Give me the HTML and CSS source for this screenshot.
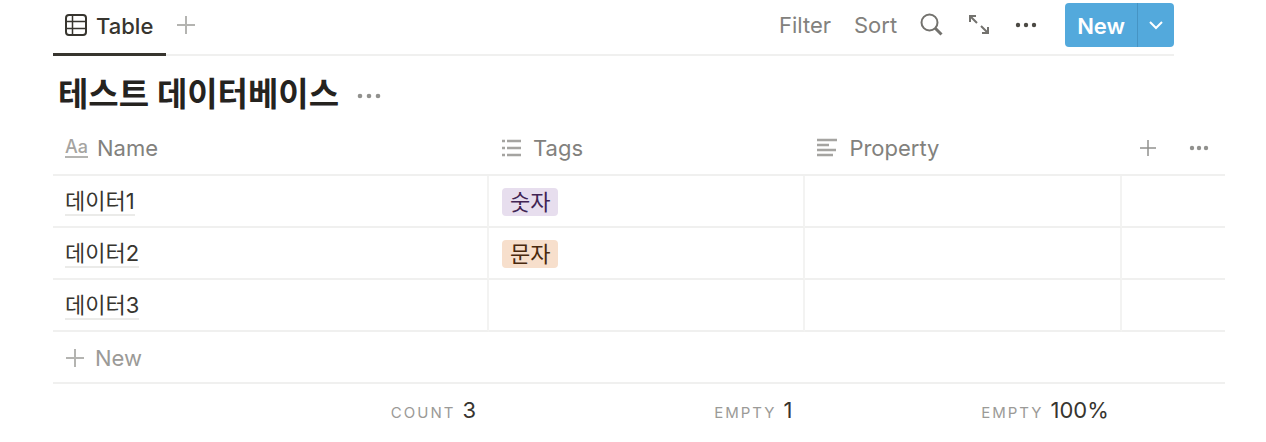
FILE: index.html
```html
<!DOCTYPE html>
<html lang="ko">
    <head>
        <meta charset="UTF-8">
        <meta name="viewport" content="width=device-width, initial-scale=1">
        <title>테스트 데이터베이스</title>
        <link rel="stylesheet" href="styles.css">
    </head>
    <body>
        <div class="toolbar">
            <nav class="tabs">
                <a href="#table" class="tab active">
                    <svg width="24" height="24" viewBox="0 0 24 24" fill="none" stroke="currentColor">
                        <rect x="2" y="1" width="20" height="20" rx="3" stroke-width="2"/>
                        <path d="M2 7.5h20M2 14.5h20M8.5 1v20" stroke-width="1.5"/>
                    </svg>
                    Table
                </a>
                <button class="icon-button add-view" aria-label="Add view">
                    <svg width="20" height="20" viewBox="0 0 20 20" stroke="currentColor" stroke-width="2">
                        <path d="M10 1v18M1 10h18"/>
                    </svg>
                </button>
            </nav>
            <div class="actions">
                <button class="text-button">Filter</button>
                <button class="text-button">Sort</button>
                <button class="icon-button" aria-label="Search">
                    <svg width="24" height="24" viewBox="0 0 24 24" fill="none" stroke="currentColor">
                        <circle cx="9.5" cy="9.5" r="8" stroke-width="2"/>
                        <path d="M15 15l6.5 6.5" stroke-width="3"/>
                    </svg>
                </button>
                <button class="icon-button" aria-label="Open as page">
                    <svg width="24" height="24" viewBox="0 0 24 24" fill="none" stroke="currentColor" stroke-width="2">
                        <path d="M3 9V3h6M3 3l7 7M21 14v6h-6M21 20l-7-7"/>
                    </svg>
                </button>
                <button class="icon-button dark" aria-label="View options">
                    <svg width="24" height="24" viewBox="0 0 24 24" fill="currentColor">
                        <circle cx="4" cy="12" r="2.2"/>
                        <circle cx="12" cy="12" r="2.2"/>
                        <circle cx="20" cy="12" r="2.2"/>
                    </svg>
                </button>
                <div class="new-group">
                    <button class="new-button">New</button>
                    <button class="new-arrow" aria-label="Templates">
                        <svg width="16" height="16" viewBox="0 0 16 16" fill="none" stroke="currentColor" stroke-width="2">
                            <path d="M2 5l6 6 6-6"/>
                        </svg>
                    </button>
                </div>
            </div>
        </div>

        <div class="title-row">
            <h1>테스트 데이터베이스</h1>
            <button class="icon-button" aria-label="Database options">
                <svg width="24" height="24" viewBox="0 0 24 24" fill="currentColor">
                    <circle cx="3" cy="14" r="2.3"/>
                    <circle cx="12" cy="14" r="2.3"/>
                    <circle cx="21" cy="14" r="2.3"/>
                </svg>
            </button>
        </div>

        <table id="table">
            <colgroup>
                <col class="col-name">
                <col class="col-property">
                <col class="col-property">
                <col>
            </colgroup>
            <thead>
                <tr>
                    <th>
                        <div class="heading name"><span class="aa">Aa</span>Name</div>
                    </th>
                    <th>
                        <div class="heading">
                            <svg width="20" height="20" viewBox="0 0 20 20" stroke="currentColor" stroke-width="2.5">
                                <path d="M1 3h3M6 3h14M1 10h3M6 10h14M1 17h3M6 17h14"/>
                            </svg>
                            Tags
                        </div>
                    </th>
                    <th>
                        <div class="heading">
                            <svg width="20" height="20" viewBox="0 0 20 20" stroke="currentColor" stroke-width="2.5">
                                <path d="M0 2h20M0 7h12M0 12h19M0 17h16"/>
                            </svg>
                            Property
                        </div>
                    </th>
                    <th>
                        <div class="column-actions">
                            <button class="icon-button" aria-label="Add property">
                                <svg width="18" height="18" viewBox="0 0 18 18" stroke="currentColor" stroke-width="1.5">
                                    <path d="M9 1v16M1 9h16"/>
                                </svg>
                            </button>
                            <button class="icon-button" aria-label="Property options">
                                <svg width="20" height="20" viewBox="0 0 20 20" fill="currentColor">
                                    <circle cx="3" cy="10" r="2.2"/>
                                    <circle cx="10" cy="10" r="2.2"/>
                                    <circle cx="17" cy="10" r="2.2"/>
                                </svg>
                            </button>
                        </div>
                    </th>
                </tr>
            </thead>
            <tbody>
                <tr>
                    <td><a href="#data1" class="page-link">데이터1</a></td>
                    <td><span class="tag purple">숫자</span></td>
                    <td></td>
                    <td></td>
                </tr>
                <tr>
                    <td><a href="#data2" class="page-link">데이터2</a></td>
                    <td><span class="tag orange">문자</span></td>
                    <td></td>
                    <td></td>
                </tr>
                <tr>
                    <td><a href="#data3" class="page-link">데이터3</a></td>
                    <td></td>
                    <td></td>
                    <td></td>
                </tr>
                <tr>
                    <td colspan="4">
                        <button class="add-row">
                            <svg width="20" height="20" viewBox="0 0 20 20" stroke="currentColor" stroke-width="2">
                                <path d="M10 1v18M1 10h18"/>
                            </svg>
                            New
                        </button>
                    </td>
                </tr>
            </tbody>
            <tfoot>
                <tr>
                    <td><span class="label">COUNT</span>3</td>
                    <td><span class="label">EMPTY</span>1</td>
                    <td><span class="label">EMPTY</span>100%</td>
                    <td></td>
                </tr>
            </tfoot>
        </table>
    </body>
</html>
```
FILE: styles.css
```css
* {
    margin: 0; padding: 0; box-sizing: border-box;
}

body {
    padding: 0 41px 0 53px;
    background-color: #fff;
    color: #37352f;
    font-family: Inter, "Noto Sans CJK KR", sans-serif;
    font-size: 22px;
    line-height: 28px;
}

button {
    border: none;
    background: none;
    color: inherit;
    font: inherit;
    cursor: pointer;
}

a {
    color: inherit;
    text-decoration: none;
}

svg {
    display: block;
    flex-shrink: 0;
}

.toolbar {
    display: flex;
    justify-content: space-between;
    height: 56px;
    margin-right: 51px;
    border-bottom: 2px solid #f0f0ef;
}

.tabs {
    display: flex;
    height: 56px;
}

.tab {
    display: flex;
    align-items: center;
    gap: 8px;
    padding: 0 13px 2px 11px;
    font-weight: 500;
}

.tab.active {
    border-bottom: 3px solid #37352f;
}

.icon-button {
    color: #91918e;
}

.add-view {
    padding: 0 10px 6px;
    color: #b4b4b1;
}

.actions {
    display: flex;
    align-items: center;
    gap: 23px;
    height: 50px;
    color: #82817d;
}

.actions .icon-button {
    color: #73726e;
}

.actions .icon-button.dark {
    color: #4b4943;
}

.new-group {
    display: flex;
    height: 44px;
    margin-left: 4px;
    border-radius: 4px;
    background-color: #53a9dc;
    color: #fff;
}

.new-button {
    padding: 2px 12px 0;
    font-weight: 600;
}

.new-arrow {
    padding: 0 10px;
    border-left: 1px solid #4694c4;
}

.title-row {
    display: flex;
    align-items: center;
    gap: 18px;
    height: 76px;
    padding-left: 5px;
}

h1 {
    color: #25231f;
    font-size: 33px;
    line-height: 40px;
    font-weight: 700;
}

table {
    width: 100%;
    border-collapse: separate;
    border-spacing: 0;
    table-layout: fixed;
}

.col-name {
    width: 37.2%;
}

.col-property {
    width: 27%;
}

th, td {
    height: 52px;
    padding: 2px 13px 0 12px;
    border-bottom: 2px solid #f0f0ef;
    text-align: left;
    font-weight: 400;
}

thead th {
    height: 44px;
    padding-top: 0;
    padding-bottom: 11px;
    line-height: 24px;
    color: #82817d;
}

tbody td {
    padding-top: 0;
    border-right: 2px solid #f3f3f2;
}

tbody td + td {
    padding-left: 13px;
}

tbody td:last-child {
    border-right: none;
}

.heading {
    display: flex;
    align-items: center;
    gap: 12px;
}

.heading.name {
    gap: 9px;
}

.heading svg {
    color: #a5a4a1;
}

.aa {
    border-bottom: 2px solid #b4b4b1;
    color: #a5a4a1;
    font-size: 18px;
    font-weight: 500;
    line-height: 18px;
}

.column-actions {
    display: flex;
    align-items: center;
    gap: 32px;
    padding-left: 5px;
}

.page-link {
    display: inline-block;
    padding-top: 2px;
    border-bottom: 2px solid #ebebe9;
    line-height: 26px;
}

.tag {
    display: inline-block;
    padding: 0 8px;
    border-radius: 4px;
    vertical-align: middle;
}

.tag.purple {
    background-color: #e7deee;
    color: #412454;
}

.tag.orange {
    background-color: #f7dfcc;
    color: #49290e;
}

.add-row {
    display: flex;
    align-items: center;
    gap: 10px;
    padding-top: 2px;
    color: #9b9a97;
}

.add-row svg {
    color: #b4b4b1;
}

tfoot td {
    border-bottom: none;
    text-align: right;
}

.label {
    margin-right: 7px;
    color: #9b9a97;
    font-size: 15px;
    letter-spacing: 2px;
}
```
